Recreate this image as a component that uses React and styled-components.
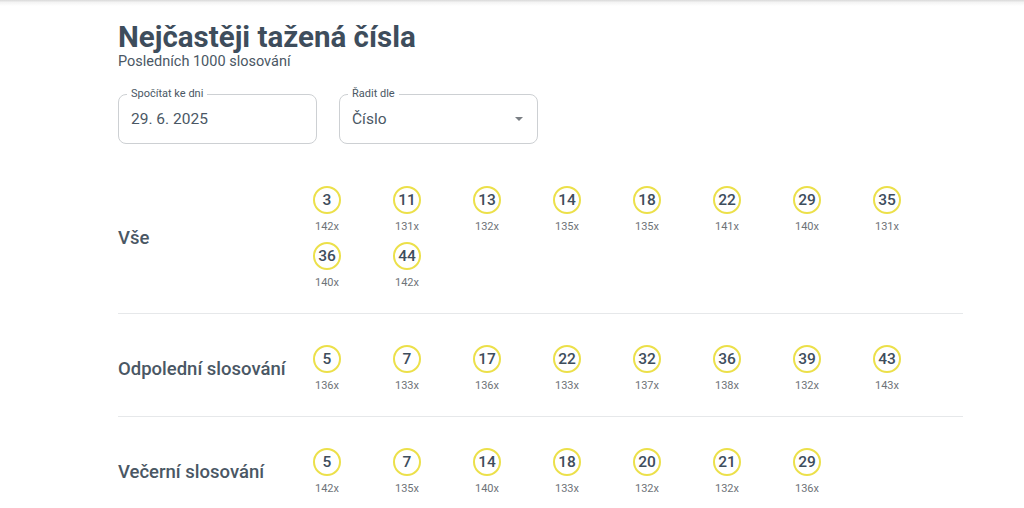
import React from 'react';
import styled, { createGlobalStyle } from 'styled-components';

const palette = {
    ink: '#3e4d5c',
    text: '#4a5764',
    muted: '#6e7378',
    line: '#e6e8ea',
    border: '#cdd0d3',
    ball: '#ece04a',
};

const GlobalStyle = createGlobalStyle`
    html, body {
        margin: 0;
        padding: 0;
        background: #fff;
        font-family: Roboto, "Noto Sans", "Liberation Sans", sans-serif;
    }
`;

const TopEdge = styled.div`
    height: 6px;
    background: linear-gradient(#d9d9d9, #f4f4f4 40%, #fff);
`;

const Page = styled.div`
    width: 845px;
    padding-left: 118px;
`;

const Title = styled.h1`
    margin: 14px 0 0;
    font-size: 29.5px;
    line-height: 34px;
    font-weight: 700;
    color: ${palette.ink};
`;

const Subtitle = styled.div`
    font-size: 14.5px;
    line-height: 16px;
    color: ${palette.text};
`;

const Filters = styled.div`
    display: flex;
    gap: 22px;
    margin-top: 24px;
`;

const Field = styled.div`
    position: relative;
    width: 199px;
    height: 50px;
    box-sizing: border-box;
    border: 1px solid ${palette.border};
    border-radius: 8px;
    display: flex;
    align-items: center;
    justify-content: space-between;
    padding: 0 12px;
    font-size: 15.5px;
    color: ${palette.text};
`;

const FieldLabel = styled.span`
    position: absolute;
    top: -8px;
    left: 8px;
    padding: 0 4px;
    background: #fff;
    font-size: 11px;
    line-height: 14px;
    color: ${palette.text};
`;

const Caret = styled.span`
    width: 0;
    height: 0;
    border-left: 4.5px solid transparent;
    border-right: 4.5px solid transparent;
    border-top: 4.5px solid #7a7f84;
    margin-right: 2px;
`;

const Groups = styled.div`
    margin-top: 11px;
`;

const Row = styled.div`
    display: flex;
    align-items: center;
    padding: 31px 0 24px;
    border-bottom: ${(p) => (p.last ? 'none' : `1px solid ${palette.line}`)};
`;

const RowLabel = styled.div`
    width: 169px;
    flex-shrink: 0;
    font-size: 18.5px;
    font-weight: 500;
    color: ${palette.text};
`;

const Balls = styled.div`
    display: grid;
    grid-template-columns: repeat(8, 80px);
    row-gap: 9px;
`;

const Item = styled.div`
    display: flex;
    flex-direction: column;
    align-items: center;
`;

const Ball = styled.div`
    width: 28px;
    height: 28px;
    box-sizing: border-box;
    border: 2px solid ${palette.ball};
    border-radius: 50%;
    display: flex;
    align-items: center;
    justify-content: center;
    font-size: 15.5px;
    font-weight: 500;
    color: ${palette.ink};
`;

const Count = styled.div`
    margin-top: 6px;
    font-size: 11px;
    line-height: 13px;
    color: ${palette.muted};
`;

const groups = [
    {
        name: 'Vše',
        items: [[3, 142], [11, 131], [13, 132], [14, 135], [18, 135], [22, 141], [29, 140], [35, 131], [36, 140], [44, 142]],
    },
    {
        name: 'Odpolední slosování',
        items: [[5, 136], [7, 133], [17, 136], [22, 133], [32, 137], [36, 138], [39, 132], [43, 143]],
    },
    {
        name: 'Večerní slosování',
        items: [[5, 142], [7, 135], [14, 140], [18, 133], [20, 132], [21, 132], [29, 136]],
    },
];

const App = () => {
    return (
        <>
            <GlobalStyle />
            <TopEdge />
            <Page>
                <Title>Nejčastěji tažená čísla</Title>
                <Subtitle>Posledních 1000 slosování</Subtitle>
                <Filters>
                    <Field>
                        <FieldLabel>Spočítat ke dni</FieldLabel>
                        29. 6. 2025
                    </Field>
                    <Field>
                        <FieldLabel>Řadit dle</FieldLabel>
                        Číslo
                        <Caret />
                    </Field>
                </Filters>
                <Groups>
                    {groups.map((g, i) => (
                        <Row key={g.name} last={i === groups.length - 1}>
                            <RowLabel>{g.name}</RowLabel>
                            <Balls>
                                {g.items.map(([n, c]) => (
                                    <Item key={n}>
                                        <Ball>{n}</Ball>
                                        <Count>{c}x</Count>
                                    </Item>
                                ))}
                            </Balls>
                        </Row>
                    ))}
                </Groups>
            </Page>
        </>
    );
};

export default App;
